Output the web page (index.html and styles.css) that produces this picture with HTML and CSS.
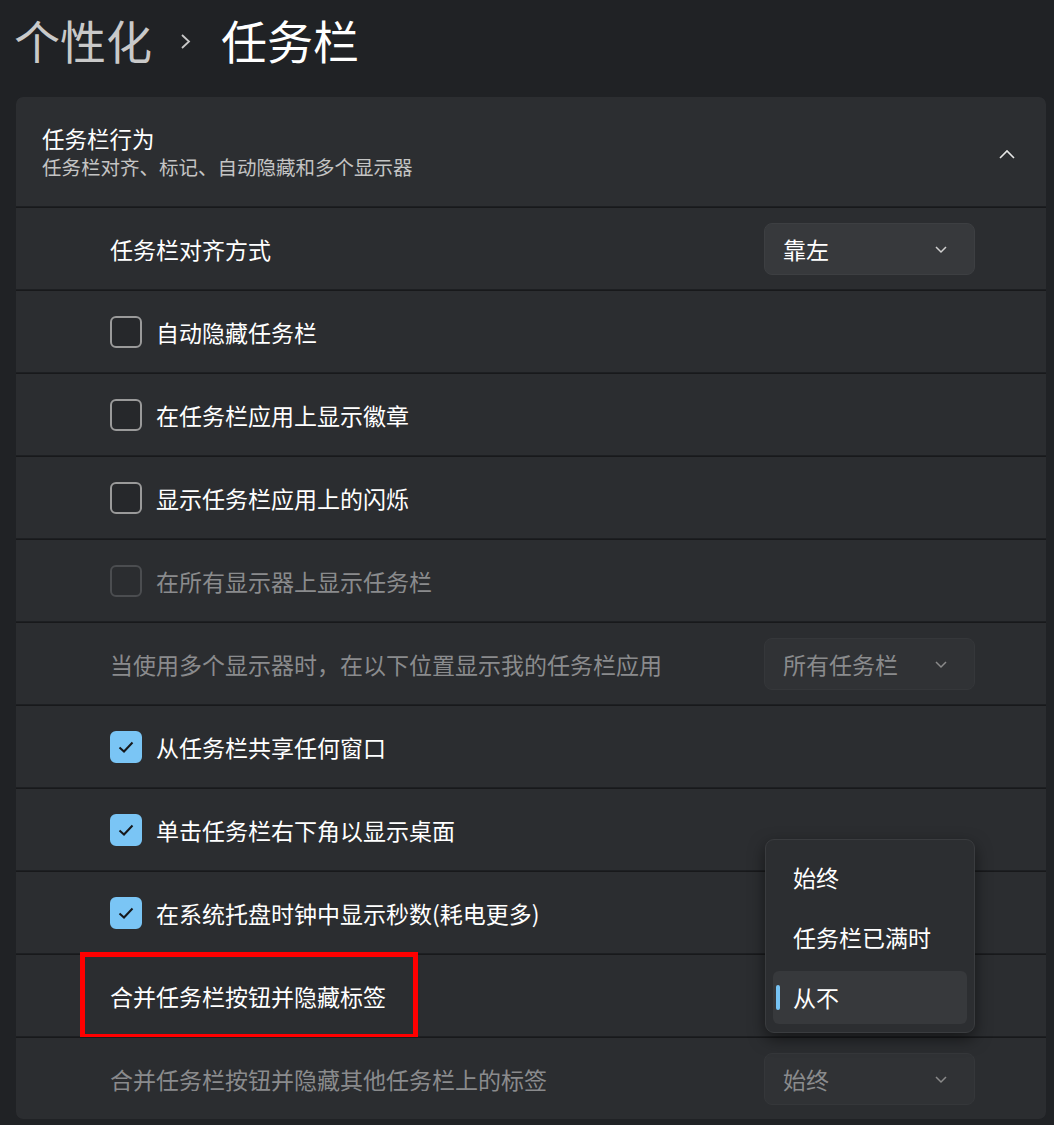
FILE: index.html
```html
<!DOCTYPE html>
<html lang="zh-CN">
<head>
<meta charset="utf-8">
<link rel="stylesheet" href="styles.css">
</head>
<body>
<div class="page">
  <h1 class="crumbs"><span class="parent">个性化</span><span class="sep"><svg width="16" height="20" viewBox="0 0 16 20"><path d="M4 4 L11 10.5 L4 17" fill="none" stroke="#c8c8c8" stroke-width="1.8"/></svg></span><span class="current">任务栏</span></h1>
  <div class="card">
    <div class="head">
      <div class="head-text">
        <div class="head-title">任务栏行为</div>
        <div class="head-sub">任务栏对齐、标记、自动隐藏和多个显示器</div>
      </div>
      <svg class="up" width="18" height="12" viewBox="0 0 18 12"><path d="M2 10 L9 3 L16 10" fill="none" stroke="#e6e6e6" stroke-width="1.6"/></svg>
    </div>
    <div class="row">
      <span class="label">任务栏对齐方式</span>
      <div class="select"><span>靠左</span><svg width="14" height="10" viewBox="0 0 14 10"><path d="M2 3 L7 8 L12 3" fill="none" stroke="#d0d0d0" stroke-width="1.5"/></svg></div>
    </div>
    <div class="row">
      <span class="box"></span><span class="label">自动隐藏任务栏</span>
    </div>
    <div class="row">
      <span class="box"></span><span class="label">在任务栏应用上显示徽章</span>
    </div>
    <div class="row">
      <span class="box"></span><span class="label">显示任务栏应用上的闪烁</span>
    </div>
    <div class="row disabled">
      <span class="box"></span><span class="label">在所有显示器上显示任务栏</span>
    </div>
    <div class="row disabled">
      <span class="label">当使用多个显示器时，在以下位置显示我的任务栏应用</span>
      <div class="select"><span>所有任务栏</span><svg width="14" height="10" viewBox="0 0 14 10"><path d="M2 3 L7 8 L12 3" fill="none" stroke="#8a8a8a" stroke-width="1.5"/></svg></div>
    </div>
    <div class="row">
      <span class="box checked"><svg width="20" height="16" viewBox="0 0 20 16"><path d="M3.5 8.5 L8 12.5 L16.5 3.5" fill="none" stroke="#16181b" stroke-width="2"/></svg></span><span class="label">从任务栏共享任何窗口</span>
    </div>
    <div class="row">
      <span class="box checked"><svg width="20" height="16" viewBox="0 0 20 16"><path d="M3.5 8.5 L8 12.5 L16.5 3.5" fill="none" stroke="#16181b" stroke-width="2"/></svg></span><span class="label">单击任务栏右下角以显示桌面</span>
    </div>
    <div class="row">
      <span class="box checked"><svg width="20" height="16" viewBox="0 0 20 16"><path d="M3.5 8.5 L8 12.5 L16.5 3.5" fill="none" stroke="#16181b" stroke-width="2"/></svg></span><span class="label">在系统托盘时钟中显示秒数(耗电更多)</span>
    </div>
    <div class="row combine">
      <span class="label">合并任务栏按钮并隐藏标签</span>
      <div class="highlight"></div>
      <div class="flyout">
        <div class="opt">始终</div>
        <div class="opt">任务栏已满时</div>
        <div class="opt selected"><span class="pill"></span>从不</div>
      </div>
    </div>
    <div class="row disabled">
      <span class="label">合并任务栏按钮并隐藏其他任务栏上的标签</span>
      <div class="select"><span>始终</span><svg width="14" height="10" viewBox="0 0 14 10"><path d="M2 3 L7 8 L12 3" fill="none" stroke="#8a8a8a" stroke-width="1.5"/></svg></div>
    </div>
  </div>
</div>
</body>
</html>
```

FILE: styles.css
```css
* { box-sizing: border-box; }
html, body { margin: 0; padding: 0; }
body {
  background: #202225;
  font-family: "Noto Sans CJK SC", "Noto Sans", sans-serif;
  color: #ffffff;
  width: 1054px;
  height: 1125px;
  overflow: hidden;
}
.page { padding: 4px 0 0 0; }
.crumbs {
  margin: 0 0 0 14px;
  height: 70px;
  display: flex;
  align-items: center;
  font-weight: 400;
  font-size: 46px;
  line-height: 60px;
}
.crumbs .parent { color: #c9c9c9; }
.crumbs .sep { display: flex; align-items: center; margin: 4px 27px 0 26px; }
.crumbs .current { color: #ffffff; }

.card {
  margin: 23px 0 0 16px;
  width: 1030px;
  border-radius: 7px;
  overflow: hidden;
  background: #1d1f22;
}
.head {
  height: 109px;
  background: #2c2e31;
  display: flex;
  align-items: center;
  justify-content: space-between;
  padding: 0 30px 0 26px;
}
.head-title { font-size: 22.5px; line-height: 28px; color: #ffffff; }
.head-sub { font-size: 19.5px; line-height: 26px; color: #c4c4c4; margin-top: 2px; }
.up { margin-top: 4px; }

.row {
  position: relative;
  height: 82px;
  margin-top: 1px;
  border-top: 1px solid #18191b;
  background: #2b2d30;
  display: flex;
  align-items: center;
  padding: 0 71px 0 94px;
}
.label {
  font-size: 23px;
  line-height: 30px;
  color: #ffffff;
  flex: 1;
}
.box {
  width: 32px;
  height: 32px;
  border: 2px solid #9a9a9a;
  border-radius: 6px;
  margin-right: 14px;
  background: #26282b;
  display: flex;
  align-items: center;
  justify-content: center;
  flex: none;
}
.box.checked {
  background: #7ac5f5;
  border-color: #7ac5f5;
}
.disabled .label { color: #8a8b8d; }
.disabled .box { border-color: #4b4d50; background: transparent; }

.select {
  width: 211px;
  height: 52px;
  border-radius: 8px;
  background: #37393c;
  border: 1px solid #3d3f42;
  display: flex;
  align-items: center;
  justify-content: space-between;
  padding: 0 26px 0 18px;
  font-size: 23px;
  color: #ffffff;
  flex: none;
}
.disabled .select { background: #303235; color: #8a8b8d; border-color: #35373a; }

.highlight {
  position: absolute;
  left: 64px;
  top: -3px;
  width: 338px;
  height: 87px;
  border: 5px solid #ff0000;
}
.flyout {
  position: absolute;
  left: 749px;
  top: -116px;
  width: 210px;
  height: 194px;
  background: #2c2e31;
  border: 1px solid #3a3c3f;
  border-radius: 9px;
  box-shadow: 0 6px 16px rgba(0,0,0,0.5);
  padding: 7px 7px 8px 7px;
  display: flex;
  flex-direction: column;
  z-index: 2;
}
.opt {
  position: relative;
  height: 60px;
  display: flex;
  align-items: center;
  padding-left: 20px;
  font-size: 23px;
  color: #ffffff;
  border-radius: 6px;
}
.opt:first-child { height: 61px; }
.opt.selected { background: #37393c; height: 54px; margin-top: 4px; }
.pill {
  position: absolute;
  left: 3px;
  top: 14px;
  width: 4px;
  height: 25px;
  border-radius: 2px;
  background: #76c3f4;
}
```
